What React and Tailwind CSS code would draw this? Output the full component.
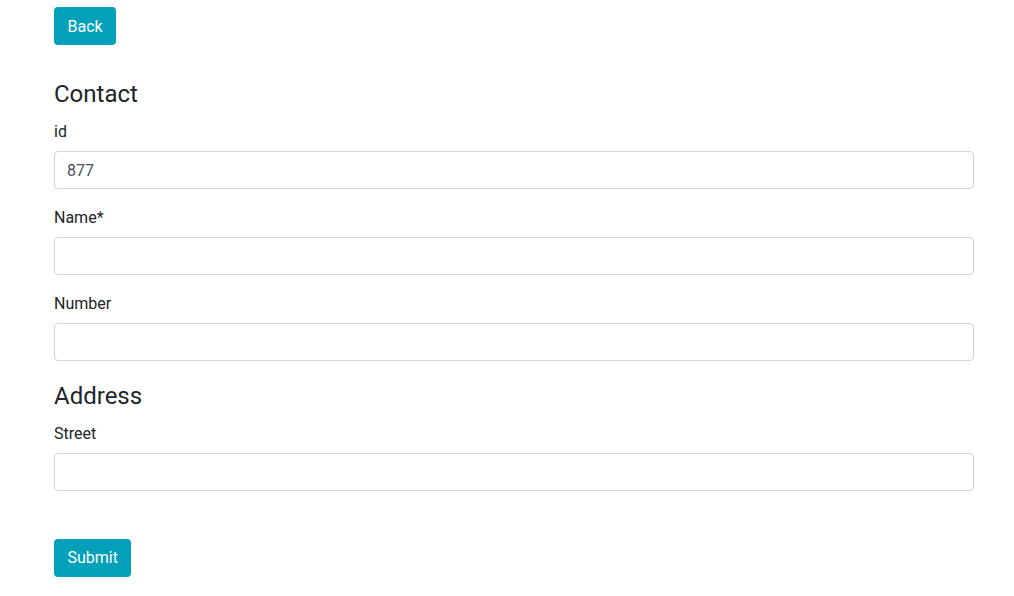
import React from "react";

function Field({ label, value }) {
  return (
    <div className="mb-4">
      <label className="block pt-px mb-[7px] text-base leading-6 text-[#212529]">{label}</label>
      <input
        type="text"
        defaultValue={value}
        className="block w-full h-[38px] px-3 pt-[2px] text-base text-[#495057] bg-white border border-[#ced4da] rounded outline-none"
      />
    </div>
  );
}

export default function App() {
  return (
    <div className="min-h-screen bg-white font-['Roboto',sans-serif] text-[#212529]">
      <div className="w-[920px] ml-[54px] pt-[7px]">
        <button className="h-[38px] px-[13.5px] pt-px rounded bg-[#02a0b9] text-white text-base">Back</button>

        <form className="mt-[35px]" onSubmit={(e) => e.preventDefault()}>
          <h4 className="text-2xl leading-[1.2] font-normal mb-[10px]">Contact</h4>
          <Field label="id" value="877" />
          <Field label="Name*" />
          <Field label="Number" />

          <h4 className="text-2xl leading-[1.2] font-normal mt-[21px] mb-[10px]">Address</h4>
          <Field label="Street" />

          <button type="submit" className="mt-[32px] h-[38px] px-[13.5px] pt-px rounded bg-[#02a0b9] text-white text-base">
            Submit
          </button>
        </form>
      </div>
    </div>
  );
}
